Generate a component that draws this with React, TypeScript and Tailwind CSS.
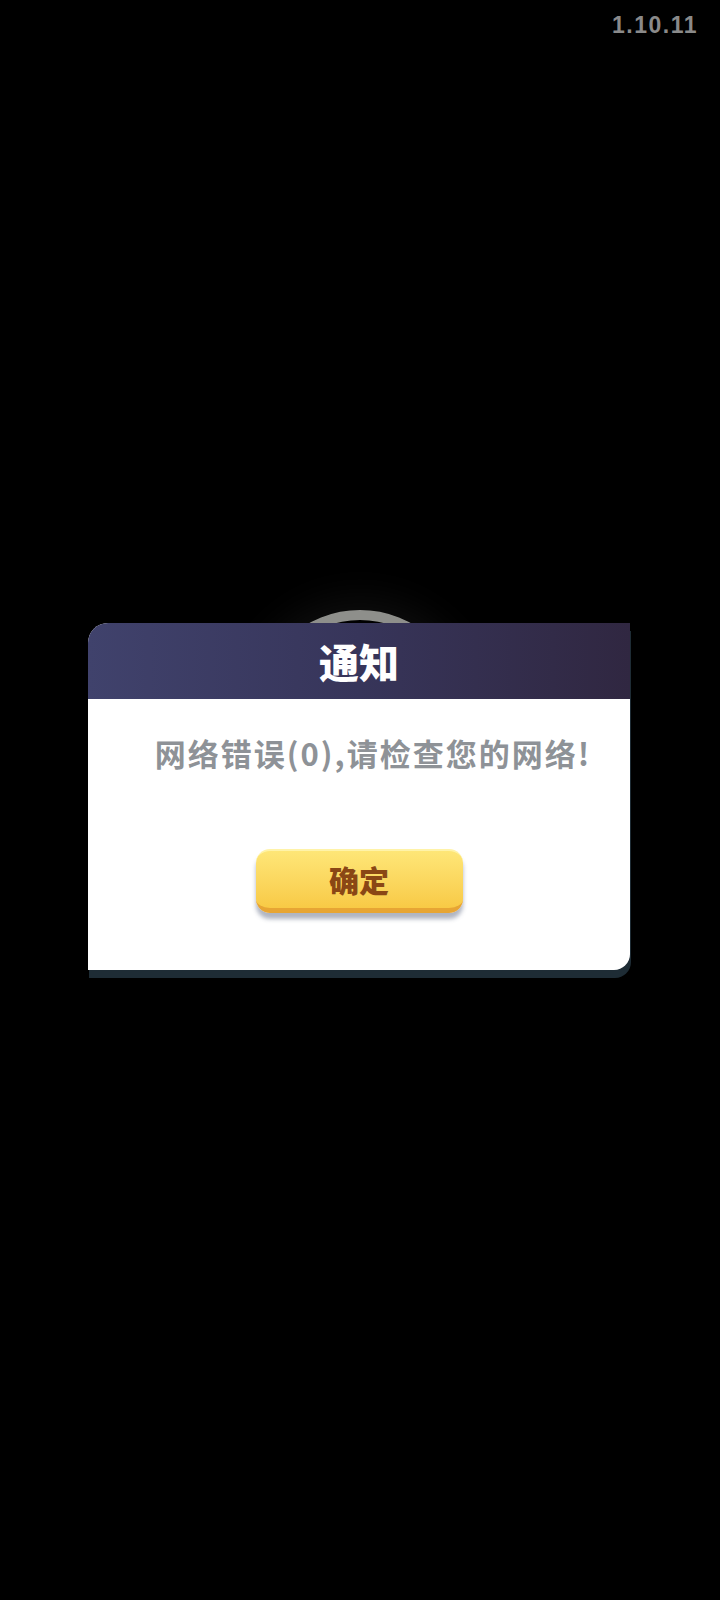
import React from 'react'

const cjk = { fontFamily: '"Noto Sans CJK SC", "Noto Sans", sans-serif' }

export default function App() {
  return (
    <div className="relative h-[1600px] w-[720px] overflow-hidden bg-black">
      {/* version tag */}
      <div className="flex justify-end pr-[22px] pt-[10px]">
        <span
          className="text-[23px] font-bold leading-[30px] tracking-[1.5px] text-[#8a8a8a]"
          style={{ fontFamily: '"Liberation Sans", Arial, sans-serif' }}
        >
          1.10.11
        </span>
      </div>

      {/* loading ring sitting behind the dialog */}
      <div className="absolute left-[254px] top-[610px] h-[212px] w-[212px] rounded-full border-[10px] border-[#8e8f8b] shadow-[0_0_40px_10px_rgba(255,255,255,0.06)]" />

      {/* notice dialog */}
      <div className="absolute inset-0 flex items-center justify-center">
        <div className="ml-[-2px] mt-[-8px] w-[542px] rounded-tl-[20px] rounded-br-[16px] bg-white shadow-[1px_8px_0_#1e2c35]" style={cjk}>
          <div className="flex h-[76px] items-center justify-center rounded-tl-[20px] bg-gradient-to-r from-[#40426c] via-[#37355a] to-[#302741]">
            <span className="text-[40px] font-black leading-none text-white">通知</span>
          </div>
          <div className="flex h-[271px] flex-col items-center pt-[38px]">
            <p className="pl-[28px] text-[31px] font-bold leading-[32px] tracking-[2px] text-[#8e9297]">
              网络错误(0),请检查您的网络!
            </p>
            <button className="mt-[80px] flex h-[64px] w-[207px] items-center justify-center rounded-[14px] border-t-[2px] border-b-[5px] border-t-[#fff3a8] border-b-[#e7a534] bg-gradient-to-b from-[#fee677] to-[#f8ca45] shadow-[0_6px_4px_rgba(80,90,120,0.45)]">
              <span className="text-[30px] font-black leading-none text-[#8a4715]">确定</span>
            </button>
          </div>
        </div>
      </div>
    </div>
  )
}
